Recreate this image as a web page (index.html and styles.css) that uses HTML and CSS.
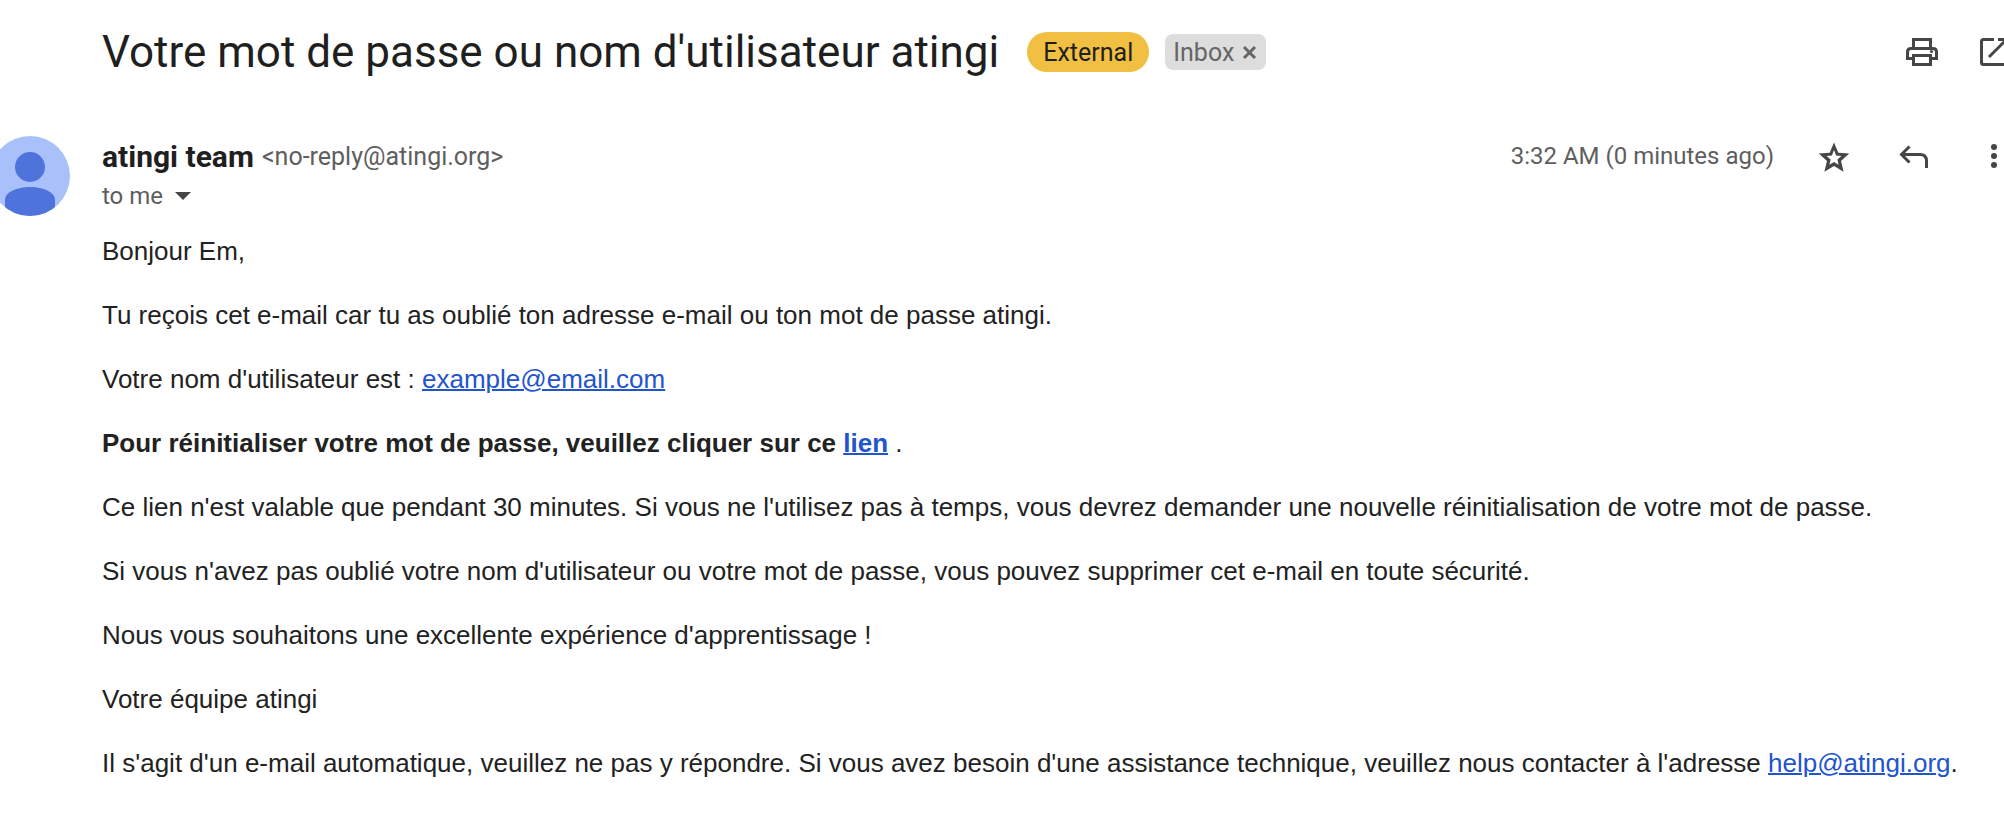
FILE: index.html
```
<!DOCTYPE html>
<html lang="fr">
<head>
  <meta charset="UTF-8">
  <meta name="viewport" content="width=device-width, initial-scale=1.0">
  <title>Votre mot de passe ou nom d'utilisateur atingi</title>
  <link rel="stylesheet" href="styles.css">
</head>
<body>
<main class="mail">
  <header class="subject">
    <h1>Votre mot de passe ou nom d'utilisateur atingi</h1>
    <span class="tag external">External</span>
    <span class="tag inbox">Inbox
      <button type="button" class="remove" aria-label="Remove label Inbox">
        <svg viewBox="0 0 16 16"><path d="M2 3l11 11M13 3L2 14"/></svg>
      </button>
    </span>
    <div class="tools">
      <button type="button" class="icon" aria-label="Print all">
        <svg viewBox="0 0 40 40"><path class="line" d="M11.500 16V7.500h17V16M10 26.500H5.500V20q0-3.500 3.500-3.500h22q3.500 0 3.500 3.500v6.500H30M11.500 23.500h17v9h-17z"/><circle cx="29.500" cy="19.500" r="1.600"/></svg>
      </button>
      <button type="button" class="icon" aria-label="In new window">
        <svg viewBox="0 0 40 40"><path class="line" d="M20 7.500H9.500q-2 0-2 2v21q0 2 2 2h21q2 0 2-2V20M24 7.500h8.500V16M32 8L15 25"/></svg>
      </button>
    </div>
  </header>

  <section class="message">
    <svg class="avatar" viewBox="0 0 80 80">
      <clipPath id="round"><circle cx="40" cy="40" r="40"/></clipPath>
      <g clip-path="url(#round)">
        <rect width="80" height="80" fill="#a8c1fb"/>
        <circle cx="40" cy="31" r="15" fill="#4e73da"/>
        <path d="M15 80V64c0-8 12-13 25-13s25 5 25 13v16z" fill="#4e73da"/>
      </g>
    </svg>

    <div class="content">
      <div class="info">
        <div class="from">
          <strong>atingi team</strong>
          <span>&lt;no-reply@atingi.org&gt;</span>
        </div>
        <time>3:32 AM (0 minutes ago)</time>
        <div class="actions">
          <button type="button" class="icon" aria-label="Star">
            <svg viewBox="0 0 40 40"><path fill-rule="evenodd" d="M20 6.500l4.300 10.200 11 .9-8.300 7.300 2.600 10.800-9.600-5.700-9.600 5.700 2.600-10.800-8.300-7.300 11-.9zM20 14l-2.100 5.400-5.300.500 4 3.600-1.200 5.300 4.600-2.900 4.600 2.900-1.200-5.300 4-3.600-5.300-.5z"/></svg>
          </button>
          <button type="button" class="icon" aria-label="Reply">
            <svg viewBox="0 0 40 40"><path class="line" d="M15.500 10.500l-8 8 8 8M8 18.500h18q6.500 0 6.500 6.500v7"/></svg>
          </button>
          <button type="button" class="icon" aria-label="More">
            <svg viewBox="0 0 40 40"><circle cx="20" cy="11" r="3"/><circle cx="20" cy="20" r="3"/><circle cx="20" cy="29" r="3"/></svg>
          </button>
        </div>
      </div>
      <button type="button" class="recipient">to me
        <svg viewBox="0 0 16 8"><path d="M0 0h16L8 8z"/></svg>
      </button>

      <article class="text">
        <p>Bonjour Em,</p>
        <p>Tu reçois cet e-mail car tu as oublié ton adresse e-mail ou ton mot de passe atingi.</p>
        <p>Votre nom d'utilisateur est : <a href="mailto:example@email.com">example@email.com</a></p>
        <p><b>Pour réinitialiser votre mot de passe, veuillez cliquer sur ce <a href="#">lien</a></b> .</p>
        <p>Ce lien n'est valable que pendant 30 minutes. Si vous ne l'utilisez pas à temps, vous devrez demander une nouvelle réinitialisation de votre mot de passe.</p>
        <p>Si vous n'avez pas oublié votre nom d'utilisateur ou votre mot de passe, vous pouvez supprimer cet e-mail en toute sécurité.</p>
        <p>Nous vous souhaitons une excellente expérience d'apprentissage !</p>
        <p>Votre équipe atingi</p>
        <p>Il s'agit d'un e-mail automatique, veuillez ne pas y répondre. Si vous avez besoin d'une assistance technique, veuillez nous contacter à l'adresse <a href="mailto:help@atingi.org">help@atingi.org</a>.</p>
      </article>
    </div>
  </section>
</main>
</body>
</html>
```
FILE: styles.css
```
body {
  margin: 0;
  overflow-x: hidden;
  background-color: #fff;
  color: #1f1f1f;
  font-family: Roboto, Arial, sans-serif;
}
button {
  padding: 0;
  border: 0;
  background: none;
  color: inherit;
  font: inherit;
  cursor: pointer;
}
svg {
  display: block;
}
/* the avatar and the last icons run over the window edges */
.mail {
  margin: 0 -10px;
}
.subject {
  display: flex;
  align-items: center;
  padding: 24px 0 24px 112px;
}
h1 {
  margin: 0 28px 0 0;
  font-size: 44px;
  font-weight: 400;
  line-height: 56px;
}
.tag {
  display: flex;
  align-items: center;
  font-size: 25px;
}
.external {
  height: 40px;
  padding: 0 16px;
  margin-right: 16px;
  border-radius: 20px;
  background-color: #f1bf42;
}
.inbox {
  height: 36px;
  padding: 0 8px;
  gap: 8px;
  border-radius: 8px;
  background-color: #ddd;
  color: #666;
}
.remove svg {
  width: 16px;
  height: 16px;
  fill: none;
  stroke: #666;
  stroke-width: 3;
}
.tools, .actions {
  display: flex;
}
.tools {
  margin-left: auto;
  gap: 32px;
}
.actions {
  margin-left: 40px;
  gap: 40px;
}
.icon svg {
  width: 40px;
  height: 40px;
  fill: #444746;
}
.icon .line {
  fill: none;
  stroke: #444746;
  stroke-width: 3;
}
.message {
  display: flex;
  align-items: flex-start;
  gap: 32px;
  padding-top: 32px;
}
.avatar {
  flex: none;
  width: 80px;
  height: 80px;
}
.content {
  flex: 1;
}
.info {
  display: flex;
  align-items: center;
  height: 40px;
}
.from {
  display: flex;
  flex: 1;
  align-items: center;
  gap: 8px;
}
.from strong {
  font-size: 30px;
}
.from span {
  color: #5e5e5e;
  font-size: 25px;
}
time, .recipient {
  color: #5e5e5e;
  font-size: 24px;
}
.recipient {
  display: flex;
  align-items: center;
  gap: 12px;
  height: 40px;
}
.recipient svg {
  width: 16px;
  height: 8px;
  fill: #444746;
}
.text {
  margin-top: 16px;
  color: #222;
  font-family: "Liberation Sans", Arial, sans-serif;
  font-size: 26px;
  line-height: 38px;
}
.text p {
  margin: 0 0 26px;
}
.text a {
  color: #2254cc;
  text-decoration-thickness: 2px;
}
```
